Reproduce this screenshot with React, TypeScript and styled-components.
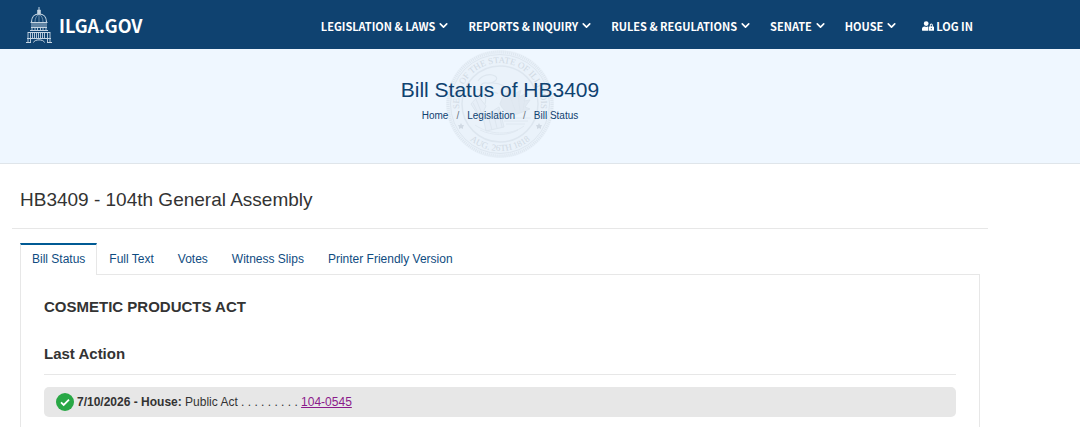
import React from "react";
import styled, { createGlobalStyle, css } from "styled-components";
import { ChevronDown } from "lucide-react";
import { FaUserLock } from "react-icons/fa";

const Global = createGlobalStyle`
  *, *::before, *::after { box-sizing: border-box; }
  body {
    margin: 0;
    background: #fff;
    color: #333;
    font-family: "Liberation Sans", Arial, sans-serif;
    font-size: 12px;
    line-height: 18px;
  }
  h1, h2, h3, p, ol, ul { margin: 0; padding: 0; }
  ol, ul { list-style: none; }
`;

const Container = styled.div`
  max-width: 1000px;
  padding: 0 12px;
`;

const Header = styled.header`
  background: #0f4270;
  font-family: "Noto Sans CJK SC", sans-serif;
  font-weight: 700;
`;

const HeaderRow = styled(Container)`
  display: flex;
  align-items: center;
  justify-content: space-between;
  height: 49px;
  padding: 0 27px 0 26px;
`;

const Brand = styled.a`
  display: flex;
  align-items: center;
  gap: 7px;
  color: #fff;
  font-size: 18px;
  line-height: 24px;
  text-decoration: none;
`;

const Menu = styled.ul`
  display: flex;
  align-items: center;
  gap: 18px;
  padding-top: 2px;
`;

const menuItem = css`
  display: flex;
  align-items: center;
  padding: 0;
  border: 0;
  background: none;
  color: #fff;
  font: inherit;
  font-size: 11px;
  line-height: 18px;
  white-space: nowrap;
  text-decoration: none;
  cursor: pointer;
`;

const MenuButton = styled.button`
  ${menuItem}
  gap: 2px;
`;

const LoginLink = styled.a`
  ${menuItem}
  gap: 2px;
  margin-left: 6px;
`;

const Hero = styled.section`
  background: #eff7ff;
  border-bottom: 1px solid #dfe5ea;
`;

const HeroInner = styled(Container)`
  position: relative;
  display: flex;
  flex-direction: column;
  align-items: center;
  padding-top: 28px;
  padding-bottom: 38px;
`;

const SealArt = styled.svg`
  position: absolute;
  top: 1px;
  left: 50%;
  transform: translateX(-50%);
`;

const PageTitle = styled.h1`
  position: relative;
  color: #0f4270;
  font-size: 21px;
  font-weight: 400;
  line-height: 26px;
`;

const Crumbs = styled.ol`
  position: relative;
  display: flex;
  gap: 8px;
  padding-top: 4px;
  color: #6c757d;
  font-size: 10px;
  line-height: 18px;
`;

const Crumb = styled.li`
  display: flex;
  gap: 8px;
`;

const CrumbLink = styled.a`
  color: #0f4270;
  text-decoration: none;
`;

const Heading = styled.h2`
  padding: 23px 8px 15px;
  border-bottom: 1px solid #e7e7e7;
  font-size: 19px;
  font-weight: 400;
  line-height: 26px;
`;

const Content = styled.div`
  padding: 14px 8px 40px;
`;

const Tabs = styled.ul`
  display: flex;
`;

const Tab = styled.a<{ $active?: boolean }>`
  display: block;
  position: relative;
  height: 32px;
  padding: 5px 11px 0;
  border: solid transparent;
  border-width: 2px 1px 0;
  color: #0f4c81;
  line-height: 18px;
  text-decoration: none;
  ${(p) =>
    p.$active &&
    css`
      background: #fff;
      border-color: #005a94 #e7e7e7 #fff;
    `}
`;

const Panel = styled.section`
  margin-top: -1px;
  padding: 20px 23px 24px;
  border: 1px solid #e7e7e7;
`;

const ActTitle = styled.h3`
  font-size: 15px;
  line-height: 24px;
`;

const SectionTitle = styled.h3`
  margin-top: 23px;
  padding-bottom: 8px;
  border-bottom: 1px solid #e7e7e7;
  font-size: 15px;
  line-height: 24px;
`;

const Action = styled.p`
  display: flex;
  align-items: center;
  gap: 3px;
  margin-top: 12px;
  padding: 6px 12px;
  border-radius: 5px;
  background: #e7e7e7;
`;

const ActLink = styled.a`
  color: #8b1a8b;
`;

function Capitol() {
  return (
    <svg width="26" height="36" viewBox="0 0 26 36" fill="none" stroke="#c5d5e3" aria-hidden="true">
      <path d="M13 0v3" strokeWidth="1" />
      <path d="M11.500 3h3v4h-3z" fill="#c5d5e3" strokeWidth=".6" />
      <path d="M5.500 15C5.500 10 8.500 7 13 7s7.500 3 7.500 8" strokeWidth="1.200" />
      <path d="M9 15c0-3.500 1.500-6.500 4-8M17 15c0-3.500-1.500-6.500-4-8M13 7v8" strokeWidth=".5" />
      <path d="M4.500 15.500h17M5 20.500h16M4 23.500h18" />
      <path d="M6 16v7M8 16v4M10 16v4M12 16v4M14 16v4M16 16v4M18 16v4M20 16v7M9 21v2M11.500 21v2M14.500 21v2M17 21v2" strokeWidth=".9" />
      <path d="M1.500 25.500h23M1 31.500h24" />
      <path d="M2 26v9M4.500 26v5M6.500 26v5M8.500 26v5M10.500 26v5M12.500 26v5M14.500 26v5M16.500 26v5M18.500 26v5M21.500 26v5M24 26v9M4.500 32v3M21.500 32v3" strokeWidth=".9" />
      <path d="M0 35.500h5M21 35.500h5M7.500 35.500c1-3.500 10-3.500 11 0" />
    </svg>
  );
}

function Seal() {
  return (
    <SealArt width="108" height="108" viewBox="0 0 108 108" fill="none" stroke="#dde6ef" aria-hidden="true">
      <defs>
        <path id="seal-upper" d="M18.500 74.500A41 41 0 1 1 89.500 74.500" />
        <path id="seal-lower" d="M13.300 77.500A47 47 0 0 0 94.700 77.500" />
      </defs>
      <circle cx="54" cy="54" r="54" fill="#eaf2fa" stroke="none" />
      <circle cx="54" cy="54" r="52" strokeWidth="3" strokeDasharray="1 1" />
      <circle cx="54" cy="54" r="49.500" />
      <circle cx="54" cy="54" r="38" strokeWidth="1.500" />
      <g fill="#d0d9e3" stroke="none" fontFamily="Liberation Serif, serif" fontSize="9">
        <text><textPath href="#seal-upper" startOffset="50%" textAnchor="middle">SEAL OF THE STATE OF ILLINOIS</textPath></text>
        <text><textPath href="#seal-lower" startOffset="50%" textAnchor="middle">AUG. 26TH 1818</textPath></text>
        <path d="m15 73 1 2h2l-1 2 0 2-2-1-2 1 0-2-1-2h2zM93 73l1 2h2l-1 2 0 2-2-1-2 1 0-2-1-2h2z" />
      </g>
      <path d="M32 31c4-6 12-8 17-5s-2 8-8 7-9 5-4 8 12-1 15 3M30 39c8 1 11 8 9 15M46 33c10 0 17 5 20 15" strokeWidth="1.200" />
      <path d="M25 54l7-8 8 10-6 12zM30 49l6 15M27 53l6 12M37 67l16-10 5 20-18 4zM42 65l4 15M47 62l4 16M52 59l4 18" fill="#e6eef7" />
      <path d="M54 54c3-10 8-14 16-15l-3 6 8-5-2 7 8-4-3 8 6-1-5 7 5 2-10 4c-7 3-15 1-20-9z" fill="#e1e9f2" />
      <path d="M57 68h28M58 71h24M60 74h19M29 75c14 10 36 11 49 1M34 80c12 6 28 6 38 0M64 46l5 14M72 44l2 17M79 48l-2 12" strokeWidth=".8" />
    </SealArt>
  );
}

function Check() {
  return (
    <svg width="18" height="18" viewBox="0 0 18 18" aria-hidden="true">
      <circle cx="9" cy="9" r="9" fill="#28a745" />
      <path d="m5 9.300 2.700 2.600 5.300-5.200" fill="none" stroke="#fff" strokeWidth="1.800" />
    </svg>
  );
}

const menus = ["LEGISLATION & LAWS", "REPORTS & INQUIRY", "RULES & REGULATIONS", "SENATE", "HOUSE"];
const crumbs = ["Home", "Legislation", "Bill Status"];
const tabs = ["Bill Status", "Full Text", "Votes", "Witness Slips", "Printer Friendly Version"];

export default function App() {
  return (
    <>
      <Global />
      <Header>
        <HeaderRow>
          <Brand href="#"><Capitol />ILGA.GOV</Brand>
          <nav>
            <Menu>
              {menus.map((m) => (
                <li key={m}>
                  <MenuButton type="button">{m}<ChevronDown size={13} strokeWidth={3} aria-hidden="true" /></MenuButton>
                </li>
              ))}
              <li><LoginLink href="#"><FaUserLock size={12} aria-hidden="true" />LOG IN</LoginLink></li>
            </Menu>
          </nav>
        </HeaderRow>
      </Header>
      <Hero>
        <HeroInner>
          <Seal />
          <PageTitle>Bill Status of HB3409</PageTitle>
          <Crumbs>
            {crumbs.map((c, i) => (
              <Crumb key={c}>{i > 0 && <span>/</span>}<CrumbLink href="#">{c}</CrumbLink></Crumb>
            ))}
          </Crumbs>
        </HeroInner>
      </Hero>
      <Container as="main">
        <Heading>HB3409 - 104th General Assembly</Heading>
        <Content>
          <Tabs>
            {tabs.map((t, i) => (
              <li key={t}><Tab href="#" $active={i === 0}>{t}</Tab></li>
            ))}
          </Tabs>
          <Panel>
            <ActTitle>COSMETIC PRODUCTS ACT</ActTitle>
            <SectionTitle>Last Action</SectionTitle>
            <Action>
              <Check />
              <span><strong>7/10/2026 - House:</strong> Public Act . . . . . . . . . <ActLink href="#">104-0545</ActLink></span>
            </Action>
          </Panel>
        </Content>
      </Container>
    </>
  );
}
